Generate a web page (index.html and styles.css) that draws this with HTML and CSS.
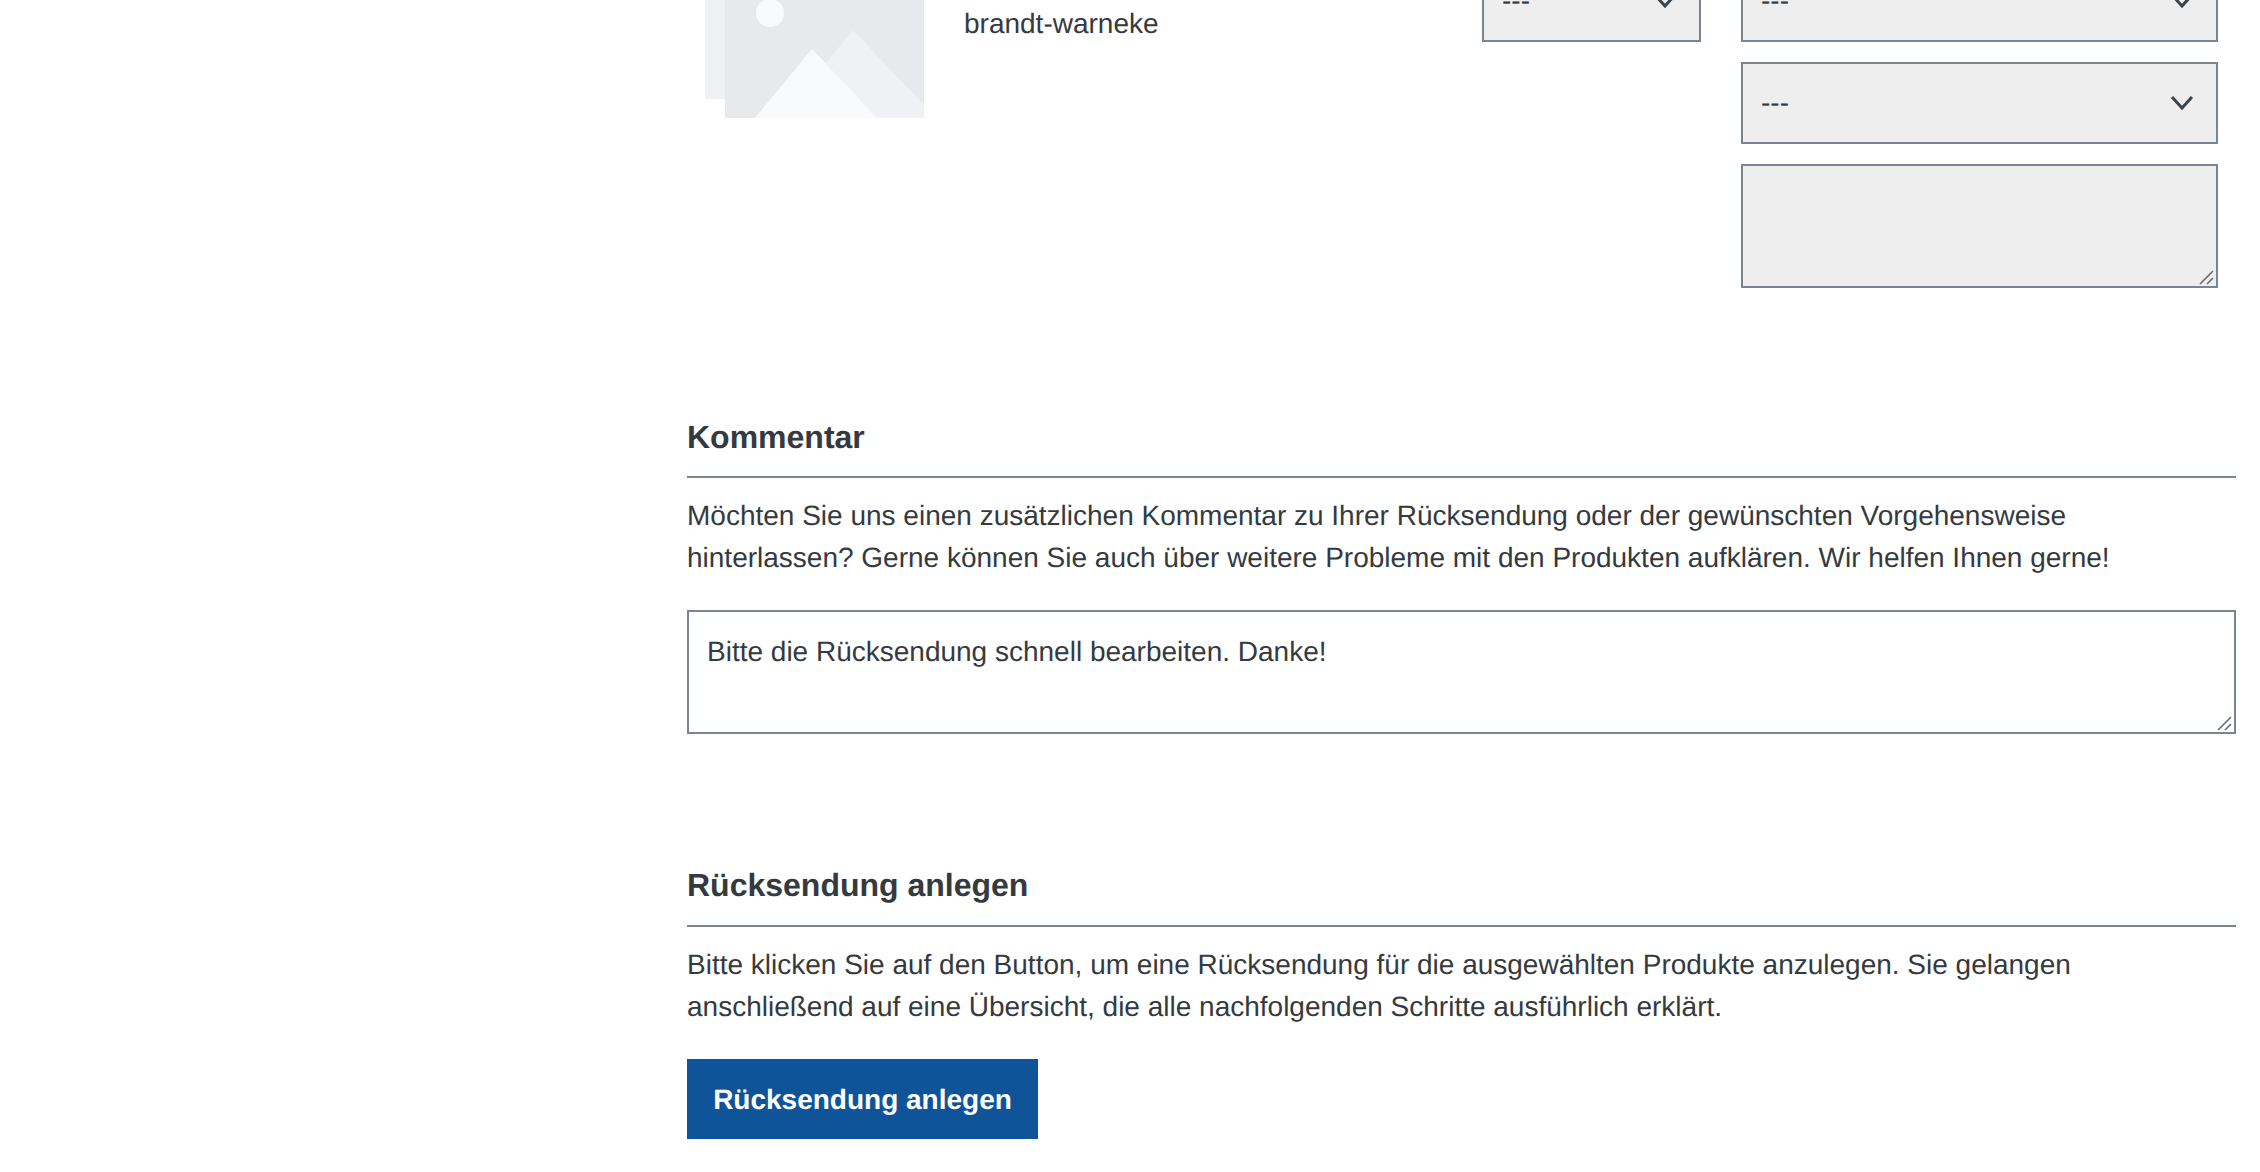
FILE: index.html
```html
<!DOCTYPE html>
<html lang="de">
<head>
    <meta charset="UTF-8">
    <meta name="viewport" content="width=device-width, initial-scale=1.0">
    <title>Rücksendung anlegen</title>
    <link rel="stylesheet" href="styles.css">
</head>
<body>
    <div class="content">

        <div class="product-row">
            <svg class="product-image" viewBox="0 0 219 158" aria-hidden="true">
                <rect x="0" y="0" width="20" height="139" fill="#f0f1f5"/>
                <rect x="20" y="0" width="199" height="158" fill="#e8e9ed"/>
                <circle cx="65" cy="53" r="14" fill="#f9fafd"/>
                <polygon points="148,70 219,145 219,158 76,158" fill="#f0f1f5"/>
                <polygon points="107,89 172,158 50,158" fill="#f9fafd"/>
            </svg>
            <div class="product-info">brandt-warneke</div>
            <div class="product-qty">
                <div class="select-wrap">
                    <select class="field-select"><option>---</option></select>
                    <svg class="chevron" viewBox="0 0 24 24" aria-hidden="true"><path d="M2 6l10 11 10-11"/></svg>
                </div>
            </div>
            <div class="product-reason">
                <div class="select-wrap">
                    <select class="field-select"><option>---</option></select>
                    <svg class="chevron" viewBox="0 0 24 24" aria-hidden="true"><path d="M2 6l10 11 10-11"/></svg>
                </div>
                <div class="select-wrap">
                    <select class="field-select"><option>---</option></select>
                    <svg class="chevron" viewBox="0 0 24 24" aria-hidden="true"><path d="M2 6l10 11 10-11"/></svg>
                </div>
                <div class="text-wrap">
                    <textarea class="field-text grey"></textarea>
                    <svg class="grip" viewBox="0 0 16 16" aria-hidden="true"><path d="M1 15L14 2M8 15l6-6"/></svg>
                </div>
            </div>
        </div>

        <div class="section comment-section">
            <h2>Kommentar</h2>
            <p>Möchten Sie uns einen zusätzlichen Kommentar zu Ihrer Rücksendung oder der gewünschten Vorgehensweise hinterlassen? Gerne können Sie auch über weitere Probleme mit den Produkten aufklären. Wir helfen Ihnen gerne!</p>
            <div class="text-wrap">
                <textarea class="field-text">Bitte die Rücksendung schnell bearbeiten. Danke!</textarea>
                <svg class="grip" viewBox="0 0 16 16" aria-hidden="true"><path d="M1 15L14 2M8 15l6-6"/></svg>
            </div>
        </div>

        <div class="section submit-section">
            <h2>Rücksendung anlegen</h2>
            <p>Bitte klicken Sie auf den Button, um eine Rücksendung für die ausgewählten Produkte anzulegen. Sie gelangen anschließend auf eine Übersicht, die alle nachfolgenden Schritte ausführlich erklärt.</p>
            <button class="submit-btn">Rücksendung anlegen</button>
        </div>

    </div>
</body>
</html>
```

FILE: styles.css
```css
html, body {
    margin: 0;
    padding: 0;
    height: 100%;
    overflow: hidden;
    background: #fff;
}
body {
    font-family: "Liberation Sans", Arial, sans-serif;
    font-size: 28px;
    line-height: 42px;
    color: #343a40;
    text-rendering: geometricPrecision;
}
.content {
    width: 1549px;
    margin-left: 687px;
    margin-top: -40px;
}
.product-row {
    display: flex;
    align-items: flex-start;
    padding: 0 18px;
}
.product-image {
    display: block;
    width: 219px;
    height: 158px;
    flex-shrink: 0;
}
.product-info {
    width: 518px;
    margin-left: 40px;
    padding-top: 43px;
}
.product-qty {
    width: 219px;
    margin-right: 40px;
}
.product-reason {
    width: 477px;
    display: flex;
    flex-direction: column;
    gap: 20px;
}
.select-wrap {
    position: relative;
    height: 82px;
}
.field-select {
    display: block;
    width: 100%;
    height: 82px;
    margin: 0;
    padding: 0 18px 2px;
    appearance: none;
    border: 2px solid #7a8591;
    border-radius: 0;
    background: #eee;
    color: #343a40;
    font-family: inherit;
    font-size: 28px;
    text-rendering: geometricPrecision;
}
.chevron {
    position: absolute;
    top: 29px;
    right: 24px;
    width: 24px;
    height: 24px;
    fill: none;
    stroke: #3b444b;
    stroke-width: 3;
    pointer-events: none;
}
.text-wrap {
    position: relative;
    height: 124px;
}
.field-text {
    display: block;
    width: 100%;
    height: 124px;
    margin: 0;
    padding: 19px 18px 17px;
    box-sizing: border-box;
    border: 2px solid #7a8591;
    border-radius: 0;
    background: #fff;
    color: #343a40;
    font-family: inherit;
    font-size: 28px;
    line-height: 42px;
    resize: none;
    text-rendering: geometricPrecision;
}
.field-text.grey {
    background: #eee;
}
.grip {
    position: absolute;
    right: 3px;
    bottom: 3px;
    width: 16px;
    height: 16px;
    fill: none;
    stroke: #666;
    stroke-width: 1.5;
    pointer-events: none;
}
.comment-section {
    margin-top: 125px;
}
.submit-section {
    margin-top: 127px;
}
h2 {
    margin: 0 0 17px;
    padding-bottom: 15px;
    border-bottom: 2px solid #7a8591;
    font-size: 32px;
    line-height: 48px;
    font-weight: bold;
}
.submit-section h2 {
    padding-bottom: 16px;
}
p {
    margin: 0 0 31px;
    width: 1460px;
}
.submit-btn {
    display: block;
    height: 80px;
    width: 351px;
    padding: 1px 0 0;
    border: none;
    background: #0f5499;
    color: #fff;
    font-family: inherit;
    font-size: 28px;
    font-weight: bold;
    text-rendering: geometricPrecision;
}
```
